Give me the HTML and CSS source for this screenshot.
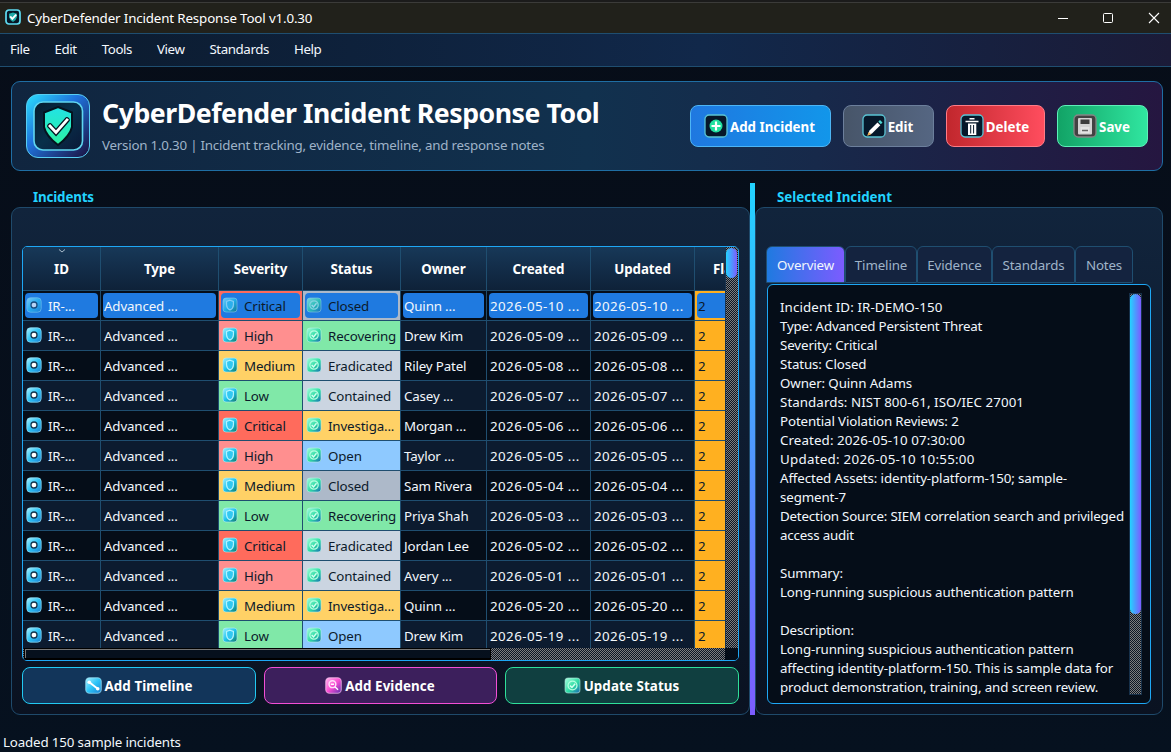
FILE: index.html
```html
<!DOCTYPE html>
<html lang="en">
<head>
<meta charset="utf-8">
<title>CyberDefender Incident Response Tool v1.0.30</title>
<link rel="stylesheet" href="styles.css">
</head>
<body>
<svg class="defs" width="0" height="0" aria-hidden="true">
  <defs>
    <linearGradient id="gLogo" x1="0" y1="0" x2="1" y2="1"><stop offset="0" stop-color="#2be0ff"/><stop offset=".42" stop-color="#1f72dc"/><stop offset="1" stop-color="#1b0f3c"/></linearGradient>
    <linearGradient id="gInner" x1="0" y1="0" x2="1" y2="1"><stop offset="0" stop-color="#061a2e"/><stop offset=".5" stop-color="#08304a"/><stop offset="1" stop-color="#0a1838"/></linearGradient>
    <linearGradient id="gShield" x1="0" y1="0" x2="0" y2="1"><stop offset="0" stop-color="#22e3e6"/><stop offset="1" stop-color="#2cf0a0"/></linearGradient>
    <linearGradient id="gId" x1="0" y1="0" x2="1" y2="1"><stop offset="0" stop-color="#a8f0ff"/><stop offset=".5" stop-color="#2cc4f7"/><stop offset="1" stop-color="#1b7fd0"/></linearGradient>
    <linearGradient id="gSev" x1="0" y1="0" x2="1" y2="1"><stop offset="0" stop-color="#9defff"/><stop offset=".5" stop-color="#1fc4ee"/><stop offset="1" stop-color="#0f7a66"/></linearGradient>
    <linearGradient id="gStat" x1="0" y1="0" x2="1" y2="1"><stop offset="0" stop-color="#a6ffdd"/><stop offset=".55" stop-color="#2fdca4"/><stop offset="1" stop-color="#1766b4"/></linearGradient>
    <linearGradient id="gEv" x1="0" y1="0" x2="1" y2="1"><stop offset="0" stop-color="#ffb4ee"/><stop offset=".5" stop-color="#fb4fd4"/><stop offset="1" stop-color="#5a2fb0"/></linearGradient>
    <symbol id="i-id" viewBox="0 0 16 16"><rect x=".8" y=".8" width="14.4" height="14.4" rx="3.6" fill="url(#gId)" stroke="#8fdcf5" stroke-opacity=".75"/><circle cx="8" cy="8" r="3" fill="#fff" stroke="#16364f" stroke-width="1.3"/></symbol>
    <symbol id="i-sev" viewBox="0 0 16 16"><rect x="1" y="1" width="14" height="14" rx="3" fill="url(#gSev)" stroke="#b8eef2" stroke-opacity=".6"/><path d="M8 3.2 11.4 4.4V8Q11.4 11.2 8 13 4.6 11.2 4.6 8V4.4Z" fill="#32c8f2" stroke="#b6f5ff" stroke-width="1.1"/></symbol>
    <symbol id="i-stat" viewBox="0 0 16 16"><rect x="1" y="1" width="14" height="14" rx="3" fill="url(#gStat)" stroke="#b8f2e4" stroke-opacity=".6"/><circle cx="8" cy="8" r="4.2" fill="none" stroke="#b4ffe0" stroke-width="1.2"/><path d="M5.7 8.1 7.5 9.9 10.5 6.3" fill="none" stroke="#d8fff0" stroke-width="1.4"/></symbol>
  </defs>
</svg>

<div class="titlebar">
  <svg class="app-icon" viewBox="0 0 16 16"><rect x="1" y="1" width="14" height="14" rx="3" fill="#071726" stroke="#5fdcf2" stroke-width="1.7"/><path d="M8 3.4 12 4.8V8Q11.6 10.6 8 12.9 4.4 10.6 4 8V4.8Z" fill="#1fa9a6"/><path d="M5.2 7.4 7.3 9.8 11.2 5.6" fill="none" stroke="#fff" stroke-width="1.9"/></svg>
  <span class="title">CyberDefender Incident Response Tool v1.0.30</span>
  <svg class="win" viewBox="0 0 102 12"><path d="M0 6.5H10" stroke="#fff"/><rect x="45.5" y="1.5" width="9" height="9" rx="1" fill="none" stroke="#fff"/><path d="M91 1 101 11M101 1 91 11" stroke="#fff" stroke-width="1.1"/></svg>
</div>

<nav class="menubar"><span>File</span><span>Edit</span><span>Tools</span><span>View</span><span>Standards</span><span>Help</span></nav>

<header class="hero">
  <svg class="logo" viewBox="0 0 64 64"><rect x=".5" y=".5" width="63" height="63" rx="11.5" fill="url(#gLogo)" stroke="#58cdf2"/><rect x="8" y="8" width="48.500" height="48" rx="9" fill="url(#gInner)" stroke="#5fd6f0" stroke-width="1.6"/><path d="M32 13 46 18.500V33Q44 42 32 51 20 42 18 33V18.500Z" fill="url(#gShield)" stroke="#04131f" stroke-width="2"/><path d="M24 32 30 38.500 41 26" fill="none" stroke="#04131f" stroke-width="5.500" stroke-linecap="round"/><path d="M24 32 30 38.500 41 26" fill="none" stroke="#fff" stroke-width="2.800" stroke-linecap="square"/></svg>
  <div class="hero-text">
    <h1>CyberDefender Incident Response Tool</h1>
    <p>Version 1.0.30 | Incident tracking, evidence, timeline, and response notes</p>
  </div>
  <div class="actions">
    <button class="btn add"><svg viewBox="0 0 24 24"><rect x="1" y="1" width="22" height="22" rx="4" fill="#06182a" stroke="#5ac4d4" stroke-width="1.3"/><circle cx="12" cy="12" r="6.500" fill="#20e0a0"/><path d="M12 7.500V16.500M7.500 12H16.500" stroke="#fff" stroke-width="2.200"/></svg><span>Add Incident</span></button>
    <button class="btn edit"><svg viewBox="0 0 24 24"><rect x="1" y="1" width="22" height="22" rx="4" fill="#06182a" stroke="#5ac4d4" stroke-width="1.3"/><path d="M5.500 21.500 7.500 16.500 15.500 8.500 18.300 11.300 10 19.500Z" fill="#fff"/><path d="M5.300 21.700 6.700 18 9.300 20.300Z" fill="#f2ae4c"/><path d="M16.300 7.700 18 6 20.500 8.500 18.800 10.200Z" fill="#4fd8d4"/></svg><span>Edit</span></button>
    <button class="btn delete"><svg viewBox="0 0 24 24"><rect x="1" y="1" width="22" height="22" rx="4" fill="#06182a" stroke="#5ac4d4" stroke-width="1.3"/><path d="M9.500 4.800H14.500M5.500 7.500H18.500" stroke="#fff" stroke-width="1.500"/><path d="M8 9.500H16.300V21H8Z" fill="#fff"/><path d="M10.700 11V19.500M13.600 11V19.500" stroke="#06182a"/></svg><span>Delete</span></button>
    <button class="btn save"><svg viewBox="0 0 24 24"><rect x="1" y="1" width="22" height="22" rx="4" fill="#424242" stroke="#858585" stroke-width="1.3"/><rect x="5" y="4" width="14" height="16.500" rx="1" fill="#d2d2d2"/><rect x="7.500" y="5.500" width="9" height="4.500" fill="#3c3c3c"/><rect x="7.500" y="13" width="9" height="6" fill="#e4e4e4"/><path d="M9 16.500H15" stroke="#666" stroke-width="1.500"/></svg><span>Save</span></button>
  </div>
</header>

<main class="split">
  <section class="side left">
    <h2>Incidents</h2>
    <div class="panel">
      <div class="table">
        <div class="view">
          <div class="grid head">
            <div><svg class="sort" viewBox="0 0 8 4"><path d="M1 .5 4 3 7 .5" fill="none" stroke="#a9bccb"/></svg>ID</div><div>Type</div><div>Severity</div><div>Status</div><div>Owner</div><div>Created</div><div>Updated</div><div class="flags">Flags</div>
          </div>
          <div class="rows" id="rows"></div>
        </div>
        <div class="vbar"><div class="thumb"></div></div>
        <div class="hbar"><div class="hthumb"></div></div>
        <div class="corner"></div>
      </div>
      <div class="foot">
        <button class="fbtn tl"><svg viewBox="0 0 16 16"><rect x=".7" y=".7" width="14.600" height="14.600" rx="3.500" fill="url(#gId)" stroke="#9ee4f8" stroke-opacity=".7"/><path d="M4 5 12 11" stroke="#fff" stroke-width="1.800"/><circle cx="4" cy="5" r="1.700" fill="#fff"/><circle cx="12" cy="11" r="1.700" fill="#fff"/></svg>Add Timeline</button>
        <button class="fbtn ev"><svg viewBox="0 0 16 16"><rect x=".7" y=".7" width="14.600" height="14.600" rx="3.500" fill="url(#gEv)" stroke="#ffc4f2" stroke-opacity=".7"/><circle cx="7" cy="6.800" r="3.200" fill="none" stroke="#ffe0fa" stroke-width="1.400"/><path d="M9.300 9.200 12.300 12M5.500 6.800H8.500" stroke="#fff" stroke-width="1.300"/></svg>Add Evidence</button>
        <button class="fbtn up"><svg viewBox="0 0 16 16"><use href="#i-stat"/></svg>Update Status</button>
      </div>
    </div>
  </section>
  <div class="splitter"></div>
  <section class="side right">
    <h2>Selected Incident</h2>
    <div class="panel">
      <div class="tabs"><span class="on">Overview</span><span>Timeline</span><span>Evidence</span><span>Standards</span><span>Notes</span></div>
      <div class="pane">
        <div class="doc"><p class="wide">Incident ID: IR-DEMO-150</p><p class="snug">Type: Advanced Persistent Threat</p><p>Severity: Critical</p><p>Status: Closed</p><p>Owner: Quinn Adams</p><p class="num">Standards: NIST 800-61, ISO/IEC 27001</p><p>Potential Violation Reviews: 2</p><p class="wide">Created: 2026-05-10 07:30:00</p><p class="wider">Updated: 2026-05-10 10:55:00</p><p>Affected Assets: identity-platform-150; sample-<br>segment-7</p><p class="snug">Detection Source: SIEM correlation search and privileged<br>access audit</p><p>&nbsp;</p><p>Summary:</p><p>Long-running suspicious authentication pattern</p><p>&nbsp;</p><p>Description:</p><p>Long-running suspicious authentication pattern<br>affecting identity-platform-150. This is sample data for<br>product demonstration, training, and screen review.</p></div>
        <div class="dbar"><div class="thumb"></div></div>
      </div>
    </div>
  </section>
</main>
<footer class="status">Loaded 150 sample incidents</footer>
<script src="app.js"></script>
</body>
</html>
```
FILE: styles.css
```css
* { box-sizing: border-box; }
body { margin: 0; width: 1171px; height: 752px; overflow: hidden; display: flex; flex-direction: column; background: linear-gradient(180deg, #070d18, #06111f); color: #f2f7fc; font: 13.33px/18px "Noto Sans", "Open Sans", sans-serif; letter-spacing: -0.15px; }
.defs { position: absolute; }
h1, h2, p { margin: 0; }
button { font: inherit; letter-spacing: 0; color: #fff; font-weight: 700; }

.titlebar { height: 33px; flex: none; background: #21211b; border-top: 2px solid #1b1b1b; box-shadow: inset 0 1px #3b3b39; display: flex; align-items: center; padding: 0 11px 0 5px; }
.app-icon { width: 16px; height: 16px; margin: -1px 6px 0 0; }
.title { flex: 1; color: #fff; letter-spacing: -0.14px; }
.win { width: 102px; height: 12px; }

.menubar { height: 34px; flex: none; display: flex; align-items: center; gap: 25px; padding: 0 10px 2px; border-top: 1px solid #1f4e70; border-bottom: 1px solid #1f4e70; background: linear-gradient(90deg, #0b1a2c, #11284a 60%, #1b1b38); letter-spacing: -0.43px; }

.hero { flex: none; height: 90px; margin: 14px 8px 0 11px; padding: 0 14px; display: flex; align-items: center; border: 1px solid #1f6ea4; border-radius: 9px; background: linear-gradient(90deg, #10253f, #11314e 50%, #17294a 70%, #251640); }
.logo { width: 64px; height: 64px; flex: none; margin-right: 12px; }
.hero-text { flex: 1; }
.hero h1 { font-size: 26.67px; line-height: 36px; font-weight: 700; color: #fff; letter-spacing: -0.47px; margin-top: -3px; white-space: nowrap; }
.hero p { color: #9fb3c8; margin-top: 5px; white-space: nowrap; letter-spacing: -0.22px; }
.actions { display: flex; gap: 12px; }
.btn { height: 42px; border: 1px solid; border-radius: 8px; display: flex; align-items: center; justify-content: center; gap: 2px; padding: 0 2px 0 0; }
.btn svg { width: 24px; height: 24px; flex: none; }
.btn span { padding-top: 2px; }
.add { width: 141px; background: linear-gradient(90deg, #1f78e0, #1296ea); border-color: #4db5f5; }
.edit { width: 91px; background: linear-gradient(90deg, #475569, #556682); border-color: #6c7f9c; }
.delete { width: 99px; background: linear-gradient(90deg, #c1272d, #ff4d5e); border-color: #ff7b86; }
.save { width: 91px; background: linear-gradient(90deg, #12a366, #30e6a0); border-color: #5df0b8; }

.split { flex: none; height: 532px; margin: 12px 8px 0 11px; display: flex; }
.side { display: flex; flex-direction: column; }
.left { width: 739px; }
.right { width: 408px; }
.splitter { width: 5px; background: linear-gradient(180deg, #22d3ff, #7c5cff); }
.side h2 { height: 24px; padding: 5px 0 0 22px; font-size: 13.33px; line-height: 18px; color: #22d3ff; letter-spacing: -0.02px; }
.left h2 { letter-spacing: -0.15px; }
.panel { flex: 1; border: 1px solid #1f4a6b; border-radius: 9px; background: linear-gradient(180deg, #11243c, #0a1221); padding: 38px 10px 10px; display: flex; flex-direction: column; }

.table { height: 415px; border: 1px solid #1ea7f5; border-radius: 5px; background: #050d18; display: grid; grid-template: 401px 12px / 702px 13px; overflow: hidden; }
.view { overflow: hidden; }
.grid { display: grid; grid-template-columns: 78px 118px 84px 98px 86px 104px 104px 80px; width: 752px; }
.head { height: 44px; background: linear-gradient(180deg, #173858, #0e2138); }
.head > div { position: relative; display: flex; align-items: center; justify-content: center; border-right: 1px solid #1f4e70; border-bottom: 1px solid #1f4e70; font-weight: 700; color: #fff; letter-spacing: -0.05px; }
.head .flags { justify-content: flex-start; padding-left: 18px; }
.sort { position: absolute; top: 2px; left: 35px; width: 8px; height: 4px; }
.row { height: 30px; }
.cell { border-right: 1px solid #1f4e70; border-bottom: 1px solid #1f4e70; padding: 2px; background: #050d18; white-space: nowrap; overflow: hidden; }
.row:nth-child(even) .cell { background: #0c1b2f; }
.cell span { display: flex; align-items: center; height: 25px; padding-left: 1px; border-radius: 4px; }
.cell svg { width: 16px; height: 16px; flex: none; margin: -1px 6px 0 0; }
.cell b { font-weight: 400; }
.row .date { letter-spacing: 0.42px; }
.row .critical { background: #ff6b5c !important; color: #0c1a2b; }
.row .high { background: #ff8f8f !important; color: #0c1a2b; }
.row .medium, .row .investiga { background: #ffd166 !important; color: #0c1a2b; }
.row .low, .row .recovering { background: #80e8a8 !important; color: #0c1a2b; }
.row .eradicated, .row .contained { background: #cbd5e1 !important; color: #0c1a2b; }
.row .closed { background: #adb9c9 !important; color: #0c1a2b; }
.row .open { background: #8ec9ff !important; color: #0c1a2b; }
.row .flag { background: #ffb020 !important; color: #0c1a2b; }
.sel .cell span { background: #1f7ae0; }
.sel .cell svg { opacity: .68; }

.vbar, .hbar, .dbar { background: repeating-conic-gradient(#7d7d7d 0 25%, #0c1624 0 50%) 0 0 / 2px 2px; }
.thumb { border-radius: 6px; background: linear-gradient(90deg, #22d3ff, #7c5cff); }
.vbar { border-left: 1px solid #1a3450; }
.vbar .thumb { height: 30px; width: 11px; margin-top: 1px; }
.hthumb { width: 467px; height: 12px; margin-left: 1px; background: #06101d; border: 1px solid #000; border-bottom-width: 2px; box-shadow: inset 1px 1px #777; }
.corner { background: #050d18; }

.foot { margin-top: 6px; display: grid; grid-template-columns: 234px 233px 234px; gap: 8px; }
.fbtn { height: 37px; border: 1px solid; border-radius: 8px; display: flex; align-items: center; justify-content: center; gap: 3px; padding: 1px 1px 0 0; letter-spacing: 0.1px; }
.fbtn svg { width: 17px; height: 17px; margin-top: -2px; }
.tl { background: #12355a; border-color: #22c9f2; }
.ev { background: #3c1f5c; border-color: #f24fd6; }
.up { background: #103f40; border-color: #2fe09a; }

.tabs { display: flex; height: 36px; margin-left: -1px; padding-left: 1px; }
.tabs span { height: 37px; display: flex; align-items: center; justify-content: center; border: 1px solid #1f4e70; border-radius: 6px 6px 0 0; background: #14233f; color: #9fb3c8; }
.tabs span:nth-child(1) { width: 79px; }
.tabs span:nth-child(2) { width: 72px; }
.tabs span:nth-child(3) { width: 75px; }
.tabs span:nth-child(4) { width: 83px; }
.tabs span:nth-child(5) { width: 58px; }
.tabs .on { background: linear-gradient(90deg, #1f7ae0, #7c5cff); color: #f2f7fc; }
.pane { height: 420px; width: 384px; margin: 2px 0 0 1px; border: 1px solid #1ea7f5; border-radius: 6px; background: #050d18; display: flex; justify-content: space-between; padding: 8px; }
.doc { height: 402px; padding: 5px 0 0 4px; line-height: 19px; white-space: nowrap; overflow: hidden; width: 353px; letter-spacing: -0.12px; }
.doc .snug { letter-spacing: -0.19px; }
.doc .num { letter-spacing: 0.06px; }
.doc .wide { letter-spacing: 0.1px; }
.doc .wider { letter-spacing: 0.27px; }
.dbar { width: 13px; height: 402px; border: 1px solid #16304a; flex: none; }
.dbar .thumb { height: 320px; }

.status { padding: 18px 0 0 3px; }
```
FILE: app.js
```js
const incidents = [
  ["Critical", "Closed", "Quinn ...", "05-10"],
  ["High", "Recovering", "Drew Kim", "05-09"],
  ["Medium", "Eradicated", "Riley Patel", "05-08"],
  ["Low", "Contained", "Casey ...", "05-07"],
  ["Critical", "Investiga...", "Morgan ...", "05-06"],
  ["High", "Open", "Taylor ...", "05-05"],
  ["Medium", "Closed", "Sam Rivera", "05-04"],
  ["Low", "Recovering", "Priya Shah", "05-03"],
  ["Critical", "Eradicated", "Jordan Lee", "05-02"],
  ["High", "Contained", "Avery ...", "05-01"],
  ["Medium", "Investiga...", "Quinn ...", "05-20"],
  ["Low", "Open", "Drew Kim", "05-19"],
];

const icon = (name) => `<svg><use href="#i-${name}"/></svg>`;
const cell = (cls, html) => `<div class="cell ${cls}"><span>${html}</span></div>`;
const key = (s) => s.toLowerCase().replace(/\./g, "");

document.getElementById("rows").innerHTML = incidents.map(([sev, stat, owner, day], i) =>
  `<div class="grid row${i === 0 ? " sel" : ""}">` +
  cell("id", icon("id") + "<b>IR-...</b>") +
  cell("type", "Advanced ...") +
  cell(key(sev), icon("sev") + `<b>${sev}</b>`) +
  cell(key(stat), icon("stat") + `<b>${stat}</b>`) +
  cell("owner", owner) +
  cell("date", `2026-${day} ...`) +
  cell("date", `2026-${day} ...`) +
  cell("flag", "2") +
  "</div>").join("");
```
